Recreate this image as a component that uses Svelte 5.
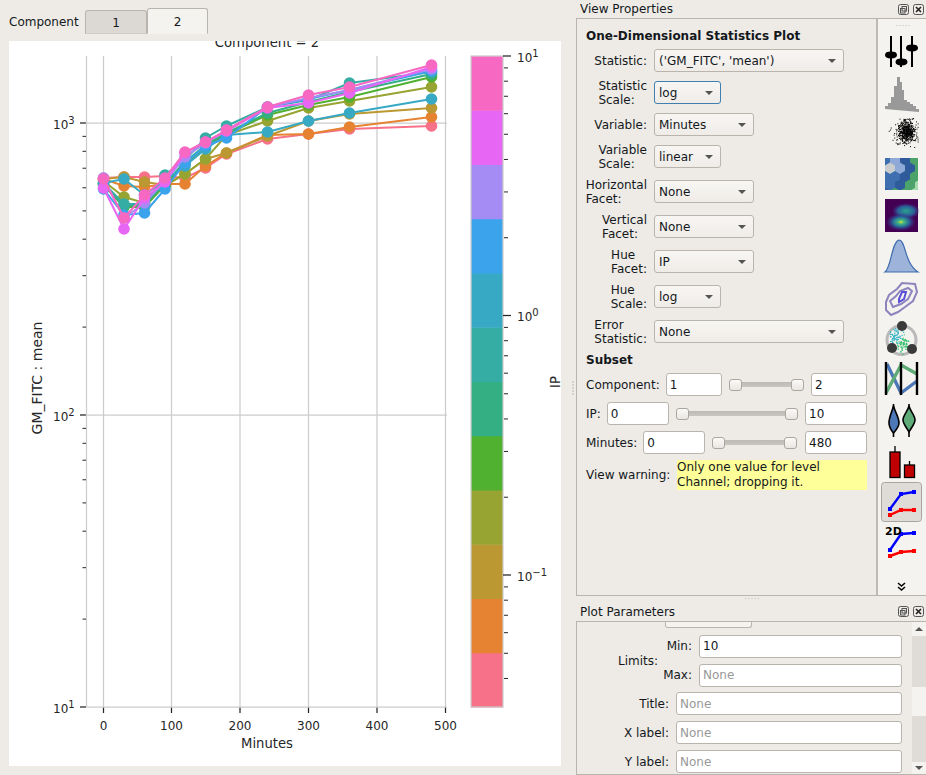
<script>
  const xs = [103.5, 124, 144.5, 165, 185, 205.5, 226.5, 267.5, 308.5, 349.5, 431.5];
  const series = [
    ['#f77189', [178,177,177,176,178,168,154,139,134,129,126]],
    ['#e68332', [179,186,187,184,184,166,153,135,134,127,117]],
    ['#bb9832', [179,177,182,185,174,159,153,136,121,114,108]],
    ['#97a431', [181,197,203,186,174,159,135,121,108,101,87]],
    ['#50b131', [185,207,207,185,164,147,134,115,105,97,77]],
    ['#34af84', [184,206,205,183,162,145,133,113,102,92,74]],
    ['#36ada4', [183,204,204,175,160,138,126,107,100,83,72]],
    ['#38a9c5', [183,179,195,180,166,149,135,132,121,113,99]],
    ['#3ba3ec', [189,215,213,189,163,146,138,107,99,90,71]],
    ['#a48cf4', [178,218,203,181,157,143,130,107,98,90,69]],
    ['#e866f4', [188,229,198,182,153,142,131,108,103,93,67]],
    ['#f668c2', [179,218,195,178,152,142,130,107,95,87,65]]
  ];
  const barH = (707 - 56) / 12;
  const xTicks = [[0,103.5],[100,171.5],[200,240],[300,308.5],[400,377],[500,445.5]];
  const k = [2,3,4,5,6,7,8,9];
  const yMinor = [];
  for (const base of [10, 100, 1000]) for (const m of k) {
    const y = 707 - 292 * (Math.log10(base * m) - 1);
    if (y >= 56) yMinor.push(y);
  }
  const cMinor = [];
  for (const top of [56, 315.5, 575]) for (const m of k) {
    const y = top + 260 * (1 - Math.log10(m));
    if (y <= 707 && y > 56) cMinor.push(y);
  }
  let seed = 7;
  const rnd = () => (seed = (seed * 16807) % 2147483647) / 2147483647;
  const gauss = () => (rnd() + rnd() + rnd() + rnd() - 2) * 1.7;
  const dots = [];
  for (let i = 0; i < 560; i++) {
    const core = i < 430;
    const x = 906 + gauss() * (core ? 3.6 : 9);
    const y = 131 + gauss() * (core ? 5.4 : 8);
    if (x >= 885 && x <= 918 && y >= 118 && y <= 148) dots.push([x, y]);
  }
  const hexCols = ['#3f6fb0','#8fa9d8','#c9cdd0','#2f5a9c','#4ba26a','#a8dab0'];
  const hexMap = [
    [0,1,3,4],[2,1,3,4],[0,0,3,4],[0,3,4,5],[3,4,4,5]
  ];
  const hexes = [];
  hexMap.forEach((row, r) => row.forEach((c, i) => {
    const cx = 885 + i * 10 + (r % 2 ? 5 : 0);
    const cy = 160 + r * 8.4;
    const h = [[0,-5.8],[5,-2.9],[5,2.9],[0,5.8],[-5,2.9],[-5,-2.9]].map(([a, b]) => `${cx + a},${cy + b}`).join(' ');
    hexes.push([h, hexCols[c]]);
  }));
  const rv = [];
  for (let i = 0; i < 70; i++) rv.push([896 + gauss() * 3, 336 + gauss() * 4, '#35b5c5']);
  for (let i = 0; i < 70; i++) rv.push([903 + gauss() * 3, 344 + gauss() * 4, '#35c070']);
  const combos = [
    { label: ['Statistic:'], val: "('GM_FITC', 'mean')", w: 'wide' },
    { label: ['Statistic', 'Scale:'], val: 'log', w: 'small focus' },
    { label: ['Variable:'], val: 'Minutes', w: 'mid' },
    { label: ['Variable', 'Scale:'], val: 'linear', w: 'small' },
    { label: ['Horizontal', 'Facet:'], val: 'None', w: 'mid loose' },
    { label: ['Vertical', 'Facet:'], val: 'None', w: 'mid loose' },
    { label: ['Hue', 'Facet:'], val: 'IP', w: 'mid loose' },
    { label: ['Hue', 'Scale:'], val: 'log', w: 'small loose' },
    { label: ['Error', 'Statistic:'], val: 'None', w: 'wide loose' }
  ];
</script>

<div class="root">
  <section class="left">
    <div class="tabbar">
      <span class="tablabel">Component</span>
      <div class="tab">1</div>
      <div class="tab on">2</div>
    </div>
    <div class="plot">
      <svg class="chart" width="552" height="725" viewBox="9 41 552 725">
        {#each xTicks as t}
          <line class="grid" x1={t[1]} x2={t[1]} y1="56" y2="707" />
          <line class="tick" x1={t[1]} x2={t[1]} y1="707" y2="713" />
          <text class="lbl" x={t[1]} y="730" text-anchor="middle">{t[0]}</text>
        {/each}
        {#each [123, 415, 707] as y}
          <line class="grid" x1="86.5" x2="447" y1={y} y2={y} />
          <line class="tick" x1="80" x2="86" y1={y} y2={y} />
        {/each}
        <line class="grid" x1="86.5" x2="86.5" y1="56" y2="707" />
        {#each yMinor as y}
          <line class="tick thin" x1="82.5" x2="86" y1={y} y2={y} />
        {/each}
        <text class="lbl" x="53" y="129">10<tspan class="sup" dy="-5">3</tspan></text>
        <text class="lbl" x="53" y="421">10<tspan class="sup" dy="-5">2</tspan></text>
        <text class="lbl" x="53" y="713">10<tspan class="sup" dy="-5">1</tspan></text>

        {#each series as s}
          <polyline class="curve" stroke={s[0]} points={s[1].map((y, i) => `${xs[i]},${y}`).join(' ')} />
          {#each s[1] as y, i}
            <circle cx={xs[i]} cy={y} r="5.8" fill={s[0]} />
          {/each}
        {/each}

        {#each series as s, i}
          <rect x="471" y={707 - (i + 1) * barH} width="32" height={barH + 0.5} fill={s[0]} />
        {/each}
        <rect class="barframe" x="471" y="56" width="32" height="651" />
        {#each [56, 315.5, 575] as y}
          <line class="tick" x1="503" x2="511" y1={y} y2={y} />
        {/each}
        {#each cMinor as y}
          <line class="tick thin" x1="504" x2="508" y1={y} y2={y} />
        {/each}
        <text class="lbl" x="517" y="62">10<tspan class="sup" dy="-5">1</tspan></text>
        <text class="lbl" x="517" y="321">10<tspan class="sup" dy="-5">0</tspan></text>
        <text class="lbl" x="517" y="581">10<tspan class="sup" dy="-5">−1</tspan></text>

        <text class="ttl" x="267" y="47" text-anchor="middle">Component = 2</text>
        <text class="ttl" x="267" y="748" text-anchor="middle">Minutes</text>
        <text class="ttl yl" transform="translate(42 378) rotate(-90)" text-anchor="middle">GM_FITC : mean</text>
        <text class="ttl" transform="translate(560 382) rotate(-90)" text-anchor="middle">IP</text>
      </svg>
    </div>
  </section>

  <section class="right">
    <div class="vgrip"></div>
    <header class="dockhead first">
      <span>View Properties</span>
      <div class="winbtns">
        <svg width="11" height="11" viewBox="0 0 11 11"><rect class="wb" x=".5" y=".5" width="10" height="10" rx="2" /><rect class="wb" x="4" y="2.500" width="4.500" height="4.500" /><rect class="wb" x="2.500" y="4.500" width="4.500" height="4.500" /></svg>
        <svg width="11" height="11" viewBox="0 0 11 11"><rect class="wb" x=".5" y=".5" width="10" height="10" rx="2" /><path class="wx" d="M3 3l5 5M8 3l-5 5" /></svg>
      </div>
    </header>
    <div class="props">
      <div class="form">
        <h2>One-Dimensional Statistics Plot</h2>
        {#each combos as c}
          <div class="row {c.w}">
            <div class="lab"><div>{#each c.label as l}<div>{l}</div>{/each}</div></div>
            <div class="combo"><span>{c.val}</span><i></i></div>
          </div>
        {/each}
        <h2 class="sub">Subset</h2>
        <div class="range">
          <label for="c1">Component:</label>
          <input id="c1" class="n56" value="1" />
          <div class="slider s79"><b></b><b></b></div>
          <input class="n56 e" value="2" />
        </div>
        <div class="range">
          <label for="i1">IP:</label>
          <input id="i1" class="n62 ip" value="0" />
          <div class="slider s123"><b></b><b></b></div>
          <input class="n62 e" value="10" />
        </div>
        <div class="range">
          <label for="m1">Minutes:</label>
          <input id="m1" class="n62 mi" value="0" />
          <div class="slider s86"><b></b><b></b></div>
          <input class="n62 e" value="480" />
        </div>
        <div class="warn">
          <span>View warning:</span>
          <div class="note">Only one value for level<br />Channel; dropping it.</div>
        </div>
      </div>
      <aside class="tools">
        <div class="grip"></div>
        <svg class="tool" viewBox="877 32 49 41">
          <g stroke="#000" stroke-width="2" fill="#000">
            <path d="M891 36v31M901 36v31M912 36v31" />
            <ellipse cx="891" cy="55" rx="5" ry="2.4" /><ellipse cx="901.5" cy="62" rx="5" ry="2.4" /><ellipse cx="912" cy="48" rx="5" ry="2.4" />
          </g>
        </svg>
        <svg class="tool" viewBox="877 73 49 41">
          <path fill="#999" d="M885 109v-3h3v-3h3v-6h3V86h3v-9h3v5h2v8h2v10h3v2h3v2h3v2h3v3h3v3z" />
        </svg>
        <svg class="tool" viewBox="877 114 49 41">
          {#each dots as d}<rect x={d[0]} y={d[1]} width="1" height="1" fill="#000" />{/each}
        </svg>
        <svg class="tool" viewBox="877 155 49 41">
          <defs><clipPath id="hc"><rect x="885" y="158" width="33" height="32" /></clipPath></defs>
          <g clip-path="url(#hc)">
            <rect x="885" y="158" width="33" height="32" fill="#4ba26a" />
            {#each hexes as h}<polygon points={h[0]} fill={h[1]} />{/each}
          </g>
        </svg>
        <svg class="tool" viewBox="877 196 49 41">
          <defs>
            <radialGradient id="g1"><stop offset="0" stop-color="#d8e030" /><stop offset=".2" stop-color="#45b880" /><stop offset=".55" stop-color="#26689a" /><stop offset="1" stop-color="#3b2a80" stop-opacity="0" /></radialGradient>
            <radialGradient id="g2"><stop offset="0" stop-color="#2aa08c" /><stop offset=".6" stop-color="#2b5f98" /><stop offset="1" stop-color="#3b2a80" stop-opacity="0" /></radialGradient>
          </defs>
          <rect x="885" y="199" width="33" height="33" fill="#440154" />
          <ellipse cx="906" cy="211" rx="14" ry="8" fill="url(#g2)" />
          <ellipse cx="901" cy="222" rx="15" ry="9" fill="url(#g1)" />
        </svg>
        <svg class="tool" viewBox="877 237 49 41">
          <path fill="#9db3da" stroke="#3f6cb0" stroke-width="1.2" d="M885 272C891 268 892 241 899 240C906 240 904 263 918 272Z" />
        </svg>
        <svg class="tool" viewBox="877 278 49 41">
          <g fill="none" stroke="#8d84bd" stroke-width="2">
            <path d="M886 302L889 295L897 289L902 283L915 284L917 292L913 301L905 307L898 312L891 315L886 310Z" />
            <path d="M890 301L896 296L900 291L908 288L912 291L908 299L901 304L893 307Z" />
          </g>
          <path fill="none" stroke="#5a50d8" stroke-width="2" d="M899 299L902 292L906 292L904 299L899 302Z" />
        </svg>
        <svg class="tool" viewBox="877 319 49 41">
          <circle cx="901.500" cy="340" r="14.500" fill="none" stroke="#b9b9b9" stroke-width="3" />
          {#each rv as d}<circle cx={d[0]} cy={d[1]} r=".7" fill={d[2]} />{/each}
          <g fill="#3a3a3a"><circle cx="902" cy="326" r="5" /><circle cx="892" cy="348" r="5" /><circle cx="912" cy="349" r="5" /></g>
        </svg>
        <svg class="tool" viewBox="877 360 49 41">
          <path fill="none" stroke="#4d78b8" stroke-width="3.4" d="M887 364L901 393L917 381" />
          <path fill="none" stroke="#5eab78" stroke-width="3.4" d="M886 393L901 365L917 374" />
          <path stroke="#000" stroke-width="2.4" d="M886 362v33M901 362v33M917 362v33" />
        </svg>
        <svg class="tool" viewBox="877 401 49 41">
          <g stroke="#000" stroke-width="1.6">
            <path d="M893.500 404v33" />
            <path fill="#4d78b8" d="M893.500 406C895 412 899 417 899 423C899 427 896 430 893.500 433C891 430 889 427 889 423C889 417 892 412 893.500 406Z" />
            <path d="M909 404v33" />
            <path fill="#5eab78" d="M909 406C910 411 915 415 915 420C915 424 911 428 909 432C907 428 903 424 903 420C903 415 908 411 909 406Z" />
          </g>
        </svg>
        <svg class="tool" viewBox="877 442 49 41">
          <g stroke="#000" stroke-width="1.3" fill="#c00000">
            <path d="M895 446v14M909.500 461v8" />
            <rect x="890" y="452" width="10" height="25.500" />
            <rect x="904.500" y="465" width="10" height="12.500" />
          </g>
        </svg>
        <svg class="tool" viewBox="877 483 49 41">
          <rect x="881.500" y="482.500" width="40" height="39" rx="3" fill="#dfdcd8" stroke="#a8a5a0" />
          <g fill="none" stroke-width="2.4"><polyline stroke="#00f" points="890,509 901,494 914,492" /><polyline stroke="#f00" points="890,515 901,510 914,510" /></g>
          <g fill="#00f"><rect x="888" y="507" width="4" height="4" /><rect x="899" y="492" width="4" height="4" /><rect x="912" y="490" width="4" height="4" /></g>
          <g fill="#f00"><rect x="888" y="513" width="4" height="4" /><rect x="899" y="508" width="4" height="4" /><rect x="912" y="508" width="4" height="4" /></g>
        </svg>
        <svg class="tool" viewBox="877 524 49 41">
          <g fill="none" stroke-width="2.4"><polyline stroke="#00f" points="890,550 901,534 914,533" /><polyline stroke="#f00" points="890,556 901,552 914,551" /></g>
          <g fill="#00f"><rect x="888" y="548" width="4" height="4" /><rect x="899" y="532" width="4" height="4" /><rect x="912" y="531" width="4" height="4" /></g>
          <g fill="#f00"><rect x="888" y="554" width="4" height="4" /><rect x="899" y="550" width="4" height="4" /><rect x="912" y="549" width="4" height="4" /></g>
          <text class="twod" x="885" y="535">2D</text>
        </svg>
        <svg class="chev" width="49" height="10" viewBox="0 0 49 10">
          <path d="M21 1l3.500 3 3.500-3M21 5l3.500 3 3.500-3" fill="none" stroke="#000" stroke-width="1.5" />
        </svg>
      </aside>
    </div>
    <div class="hgrip"></div>
    <header class="dockhead second">
      <span>Plot Parameters</span>
      <div class="winbtns">
        <svg width="11" height="11" viewBox="0 0 11 11"><rect class="wb" x=".5" y=".5" width="10" height="10" rx="2" /><rect class="wb" x="4" y="2.500" width="4.500" height="4.500" /><rect class="wb" x="2.500" y="4.500" width="4.500" height="4.500" /></svg>
        <svg width="11" height="11" viewBox="0 0 11 11"><rect class="wb" x=".5" y=".5" width="10" height="10" rx="2" /><path class="wx" d="M3 3l5 5M8 3l-5 5" /></svg>
      </div>
    </header>
    <div class="params">
      <div class="scrollarea">
        <div class="stub"></div>
        <div class="limits">
          <span class="limlab">Limits:</span>
          <div class="limcol">
            <div class="prow"><span>Min:</span><input value="10" /></div>
            <div class="prow"><span>Max:</span><input placeholder="None" /></div>
          </div>
        </div>
        {#each ['Title:', 'X label:', 'Y label:'] as l}
          <div class="prow full"><span>{l}</span><input placeholder="None" /></div>
        {/each}
      </div>
      <div class="scrollbar">
        <div class="sbtn"><i class="up"></i></div>
        <div class="sgroove"></div>
        <div class="shandle"></div>
        <div class="sgroove two"></div>
        <div class="sbtn low"><i class="down"></i></div>
      </div>
    </div>
  </section>
</div>

<style>
  :global(body) { margin: 0; background: #eeebe6; }
  .root {
    width: 926px; height: 775px; overflow: hidden;
    display: grid; grid-template-columns: 570px 356px;
    background: #eeebe6; color: #14181c;
    font: 12px/14px "DejaVu Sans", sans-serif;
  }
  .left { padding: 8px 0 0 9px; box-sizing: border-box; }
  .tabbar { display: flex; align-items: flex-end; height: 26px; margin-bottom: 7px; }
  .tablabel { align-self: center; margin: 1px 7px 0 0; width: 69px; }
  .tab {
    width: 62px; height: 24px; box-sizing: border-box; text-align: center; line-height: 24px;
    background: #dcd9d4; border: 1px solid #b9b5ae; border-bottom: 1px solid #cfcbc5; border-radius: 3px 3px 0 0;
  }
  .tab.on { width: 61px; height: 26px; line-height: 27px; background: #f5f3ef; border-bottom-color: #f5f3ef; }
  .plot { width: 552px; height: 725px; background: #fff; overflow: hidden; }
  .chart { display: block; }
  .grid { stroke: #cccccc; stroke-width: 1.25; }
  .tick { stroke: #262626; stroke-width: 1.25; }
  .tick.thin { stroke-width: 1; }
  .lbl { font: 12px "DejaVu Sans", sans-serif; fill: #262626; }
  .sup { font-size: 10px; }
  .ttl { font: 13.2px "DejaVu Sans", sans-serif; fill: #262626; }
  .ttl.yl { font-size: 14px; }
  .curve { fill: none; stroke-width: 2; }
  .barframe { fill: none; stroke: #cccccc; stroke-width: 1.25; }

  .right { display: flex; flex-direction: column; padding-left: 6px; position: relative; }
  .vgrip {
    position: absolute; left: 2px; top: 380px; width: 2px; height: 16px;
    background: radial-gradient(circle, #bbb 0.6px, transparent 0.9px) center / 2px 3px repeat-y;
  }
  .dockhead { display: flex; justify-content: space-between; align-items: center; padding-left: 4px; }
  .dockhead.first { height: 18px; }
  .dockhead.second { height: 20px; margin-top: 1px; }
  .dockhead.first span { margin-top: -1px; }
  .dockhead.second span { margin-top: 1px; }
  .winbtns { display: flex; gap: 4px; padding-right: 2px; }
  .wb { fill: none; stroke: #555; stroke-width: 1; }
  .wx { fill: none; stroke: #222; stroke-width: 1.6; }

  .props {
    height: 578px; box-sizing: border-box; display: flex;
    border: 1px solid #b9b5ae; border-right: 0;
  }
  .form {
    width: 301px; box-sizing: border-box; padding: 10px 0 0 9px; border-right: 2px solid #bdb9b3; flex: none;
    display: flex; flex-direction: column; align-items: flex-start;
  }
  h2 { font-size: 12px; line-height: 14px; font-weight: 700; margin: 0 0 6px; }
  h2.sub { margin: 1px 0 6px; }
  .row { display: flex; align-items: center; height: 23px; margin-bottom: 9px; flex: none; }
  .row.loose { margin-top: 3px; }
  .lab { width: 61px; display: flex; justify-content: flex-end; margin-right: 7px; flex: none; }
  .combo {
    height: 23px; box-sizing: border-box; display: flex; justify-content: space-between; align-items: center;
    padding: 0 7px 0 4px; border: 1px solid #b9b5ae; border-radius: 3px;
    background: linear-gradient(#f8f6f3, #efece8);
  }
  .combo i { width: 0; height: 0; border: 4px solid transparent; border-top: 4px solid #555; border-bottom: 0; }
  .wide .combo { width: 190px; }
  .mid .combo { width: 100px; }
  .small .combo { width: 67px; }
  .focus .combo { border-color: #3f7fb0; }

  .range { display: flex; align-items: center; height: 23px; margin-bottom: 6px; width: 281px; flex: none; }
  .range label { flex: none; }
  input {
    height: 23px; box-sizing: border-box; border: 1px solid #b9b5ae; border-radius: 3px; background: #fff;
    font: inherit; color: #14181c; padding: 0 3px; outline: 0; min-width: 0; flex: none;
  }
  input::placeholder { color: #999; }
  .n56 { width: 56px; margin-left: 6px; }
  .n62 { width: 62px; }
  .ip { margin-left: 6px; }
  .mi { margin-left: 6px; }
  .e { margin-left: auto; }
  .slider {
    height: 12px; margin-left: 7px; display: flex; justify-content: space-between; align-items: center;
    box-sizing: border-box; flex: none;
    background: linear-gradient(#bdb9b3, #c9c5bf) center / 100% 5px no-repeat;
  }
  .s79 { width: 75px; }
  .s123 { width: 122px; }
  .s86 { width: 85px; }
  .slider b {
    width: 13px; height: 12px; box-sizing: border-box; border: 1px solid #aaa6a0; border-radius: 3px;
    background: linear-gradient(#fbfaf8, #e9e6e2);
  }
  .warn { display: flex; align-items: center; width: 281px; justify-content: space-between; flex: none; }
  .note { width: 190px; height: 30px; background: #ffff99; line-height: 15px; }

  .tools { flex: 1; background: #f5f3ef; display: flex; flex-direction: column; min-width: 0; }
  .grip {
    height: 12px; margin: 0 15px 0 17px; flex: none;
    background: radial-gradient(circle, #bbb 0.6px, transparent 0.9px) center / 3px 3px repeat-x;
  }
  .tool { display: block; width: 49px; height: 41px; flex: none; overflow: visible; margin-left: -1px; }
  .tools .tool:first-of-type { margin-top: 1px; }
  .chev { margin: 17px 0 0 -1px; flex: none; }
  .twod { font: 700 11px "DejaVu Sans", sans-serif; fill: #000; }

  .hgrip {
    height: 4px; margin: 0 166px 0 168px; flex: none;
    background: radial-gradient(circle, #bbb 0.6px, transparent 0.9px) center / 3px 3px repeat-x;
  }

  .params { flex: 1; display: flex; border: 1px solid #b9b5ae; border-right: 0; min-height: 0; }
  .scrollarea { width: 335px; flex: none; overflow: hidden; box-sizing: border-box; padding-right: 10px; }
  .stub { width: 87px; height: 6px; margin-left: 88px; box-sizing: border-box; border: 1px solid #b9b5ae; border-top: 0; border-radius: 0 0 3px 3px; background: #f5f3ef; }
  .limits { display: flex; align-items: center; margin-top: 7px; height: 51px; }
  .limlab { width: 81px; text-align: right; flex: none; }
  .limcol { flex: 1; display: flex; flex-direction: column; gap: 6px; }
  .prow { display: flex; align-items: center; justify-content: flex-end; height: 23px; }
  .prow span { margin-right: 7px; }
  .limcol input { width: 203px; }
  .prow.full { margin-top: 6px; }
  .prow.full input { width: 226px; }

  .scrollbar { width: 14px; flex: none; display: flex; flex-direction: column; }
  .sbtn { height: 14px; background: #f5f3ef; display: flex; align-items: center; justify-content: center; flex: none; }
  .sbtn.low { height: 12px; }
  .sbtn i { display: block; width: 0; height: 0; border: 4px solid transparent; }
  .sbtn i.up { border-bottom: 4px solid #555; border-top: 0; }
  .sbtn i.down { border-top: 4px solid #555; border-bottom: 0; }
  .sgroove { height: 51px; background: #dfdcd7; flex: none; }
  .sgroove.two { height: 46px; }
  .shandle { height: 29px; background: #f5f3ef; flex: none; }
</style>
